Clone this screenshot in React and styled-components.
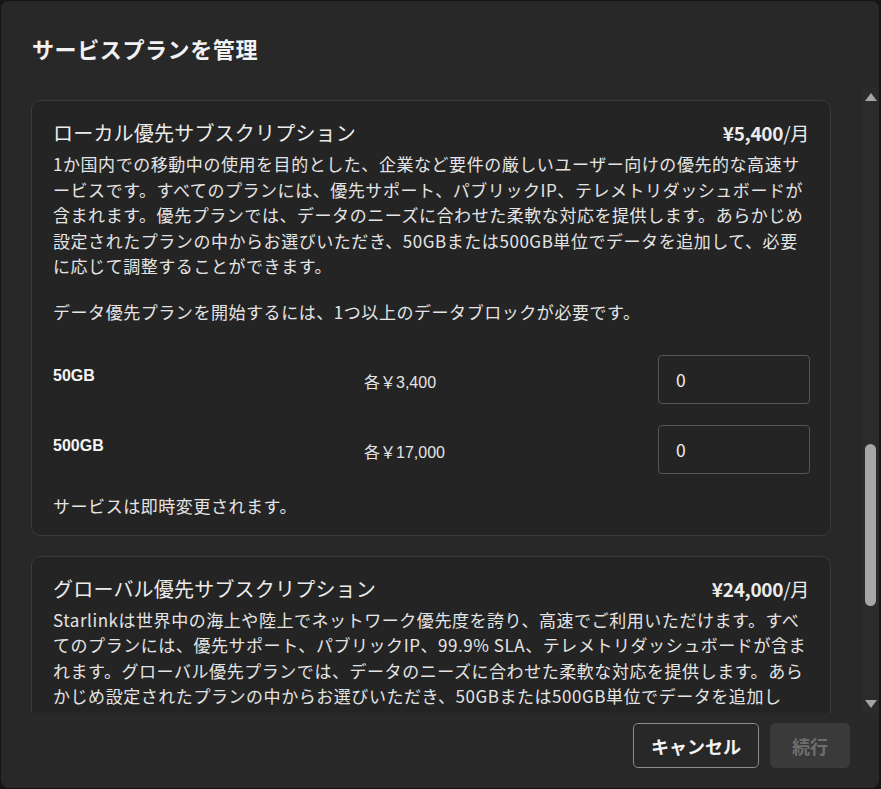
import React, { useState } from 'react'
import styled, { createGlobalStyle } from 'styled-components'

const GlobalStyle = createGlobalStyle`
  html, body {
    margin: 0;
    padding: 0;
    background: #161616;
    overflow: hidden;
  }
  * {
    box-sizing: border-box;
  }
`

const JP = `"Noto Sans CJK JP", "Noto Sans", sans-serif`
const ARIAL = `"Liberation Sans", "Noto Sans CJK JP", sans-serif`

const Dialog = styled.div`
  margin: 1px;
  width: 878px;
  height: 787px;
  background: #282828;
  border-radius: 8px;
  display: flex;
  flex-direction: column;
  font-family: ${JP};
  color: #e6e6e6;
  overflow: hidden;
`

const Header = styled.h1`
  margin: 0;
  padding: 29px 0 0 31px;
  height: 87px;
  font-size: 22px;
  line-height: 36px;
  font-weight: 700;
  color: #f2f2f2;
  letter-spacing: 0.6px;
`

const Body = styled.div`
  display: flex;
  height: 625px;
  padding-left: 30px;
`

const CardList = styled.div`
  width: 801px;
  overflow: hidden;
  padding-top: 12px;
  display: flex;
  flex-direction: column;
  gap: 20px;
`

const Card = styled.section`
  flex-shrink: 0;
  background: #242424;
  border: 1px solid #3a3a3a;
  border-radius: 9px;
  padding: 18px 21px 16px 21px;
`

const CardHead = styled.div`
  display: flex;
  justify-content: space-between;
  align-items: baseline;
`

const CardTitle = styled.h2`
  margin: 0;
  font-size: 20px;
  line-height: 27px;
  font-weight: 400;
  color: #ececec;
  letter-spacing: 0.2px;
`

const Price = styled.div`
  font-size: 19px;
  line-height: 27px;
  font-weight: 700;
  color: #ececec;
  letter-spacing: -0.3px;

  span {
    font-weight: 400;
  }
`

const Text = styled.p`
  margin: ${p => p.$gap || 0}px 0 0 0;
  font-size: 17px;
  line-height: 25.5px;
  letter-spacing: 0.55px;
  color: #e4e4e4;
`

const BlockRow = styled.div`
  display: grid;
  grid-template-columns: 313px 1fr 152px;
  align-items: start;
  margin-top: ${p => p.$top}px;
`

const BlockLabel = styled.div`
  font-family: ${ARIAL};
  font-size: 16px;
  font-weight: 700;
  color: #f4f4f4;
  padding-top: 14px;
`

const BlockPrice = styled.div`
  font-family: ${ARIAL};
  font-size: 16px;
  color: #e4e4e4;
  padding-top: 16px;
  margin-left: -2px;
`

const QtyInput = styled.input`
  width: 152px;
  height: 49px;
  margin-top: 2px;
  margin-left: 1px;
  background: #242424;
  border: 1px solid #555;
  border-radius: 4px;
  padding: 0 17px;
  font-family: ${JP};
  font-size: 17.5px;
  color: #f0f0f0;
  outline: none;
`

const Rail = styled.div`
  width: 17px;
  margin-left: 31px;
  background: #2b2b2b;
  display: flex;
  flex-direction: column;
  align-items: center;
  padding: 5px 0;
`

const Arrow = styled.div`
  width: 0;
  height: 0;
  border-left: 6px solid transparent;
  border-right: 6px solid transparent;
  ${p => p.$down ? 'border-top: 8px solid #a5a5a5;' : 'border-bottom: 8px solid #a5a5a5;'}
`

const Track = styled.div`
  flex: 1;
  width: 100%;
  display: flex;
  justify-content: center;
`

const Thumb = styled.div`
  width: 11px;
  height: 162px;
  border-radius: 6px;
  background: #a6a6a6;
  margin-top: 343px;
`

const Footer = styled.div`
  display: flex;
  justify-content: flex-end;
  gap: 11px;
  padding: 10px 29px 0 0;
`

const Button = styled.button`
  height: 45px;
  width: ${p => p.$w}px;
  padding: 0;
  border-radius: 5px;
  font-family: ${JP};
  font-size: 18px;
  font-weight: 700;
  cursor: pointer;
  background: ${p => p.$primary ? '#3a3a3a' : 'transparent'};
  color: ${p => p.$primary ? '#6e6e6e' : '#f4f4f4'};
  border: 1px solid ${p => p.$primary ? '#3a3a3a' : '#8c8c8c'};
`

const blocks = [
  { size: '50GB', price: '各￥3,400', top: 29 },
  { size: '500GB', price: '各￥17,000', top: 19 },
]

export default function App() {
  const [qty, setQty] = useState({ '50GB': '0', '500GB': '0' })

  return (
    <>
      <GlobalStyle />
      <Dialog>
        <Header>サービスプランを管理</Header>
        <Body>
          <CardList>
            <Card>
              <CardHead>
                <CardTitle>ローカル優先サブスクリプション</CardTitle>
                <Price>¥5,400<span>/月</span></Price>
              </CardHead>
              <Text $gap={5}>
                1か国内での移動中の使用を目的とした、企業など要件の厳しいユーザー向けの優先的な高速サービスです。すべてのプランには、優先サポート、パブリックIP、テレメトリダッシュボードが含まれます。優先プランでは、データのニーズに合わせた柔軟な対応を提供します。あらかじめ設定されたプランの中からお選びいただき、50GBまたは500GB単位でデータを追加して、必要に応じて調整することができます。
              </Text>
              <Text $gap={20}>データ優先プランを開始するには、1つ以上のデータブロックが必要です。</Text>
              {blocks.map(b => (
                <BlockRow key={b.size} $top={b.top}>
                  <BlockLabel>{b.size}</BlockLabel>
                  <BlockPrice>{b.price}</BlockPrice>
                  <QtyInput
                    value={qty[b.size]}
                    onChange={e => setQty({ ...qty, [b.size]: e.target.value })}
                  />
                </BlockRow>
              ))}
              <Text $gap={19}>サービスは即時変更されます。</Text>
            </Card>
            <Card>
              <CardHead>
                <CardTitle>グローバル優先サブスクリプション</CardTitle>
                <Price>¥24,000<span>/月</span></Price>
              </CardHead>
              <Text $gap={5}>
                Starlinkは世界中の海上や陸上でネットワーク優先度を誇り、高速でご利用いただけます。すべてのプランには、優先サポート、パブリックIP、99.9% SLA、テレメトリダッシュボードが含まれます。グローバル優先プランでは、データのニーズに合わせた柔軟な対応を提供します。あらかじめ設定されたプランの中からお選びいただき、50GBまたは500GB単位でデータを追加して、必要に応じて調整することができます。
              </Text>
            </Card>
          </CardList>
          <Rail>
            <Arrow />
            <Track><Thumb /></Track>
            <Arrow $down />
          </Rail>
        </Body>
        <Footer>
          <Button $w={126}>キャンセル</Button>
          <Button $primary $w={80} disabled>続行</Button>
        </Footer>
      </Dialog>
    </>
  )
}
